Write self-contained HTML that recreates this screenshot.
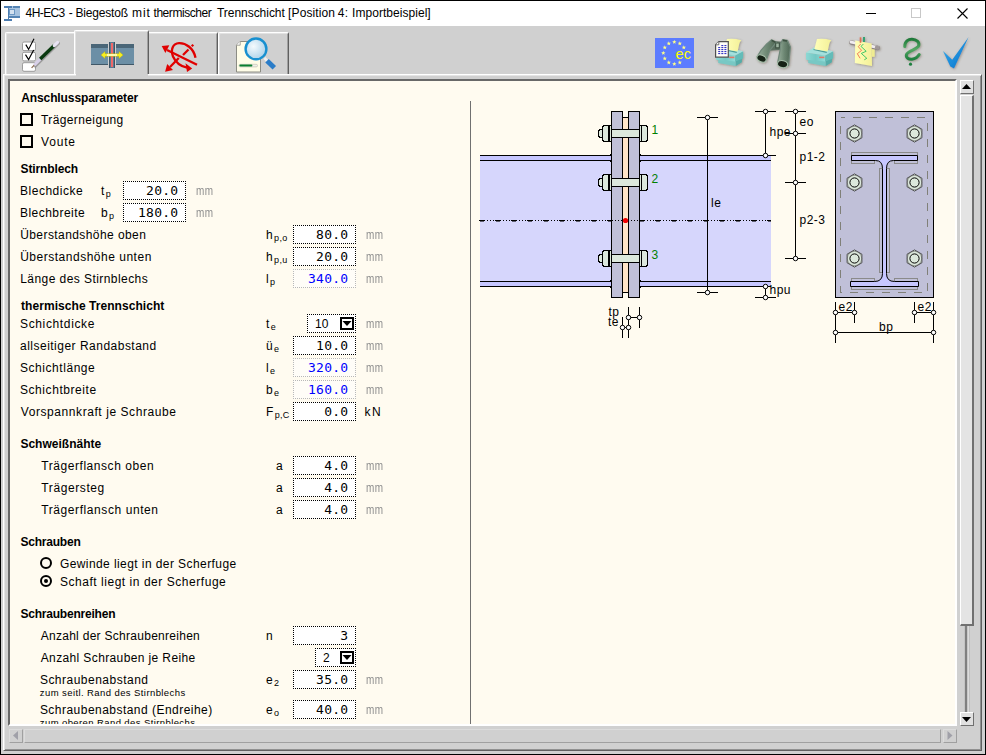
<!DOCTYPE html>
<html><head><meta charset="utf-8"><title>4H-EC3</title>
<style>
*{box-sizing:border-box;margin:0;padding:0}
html,body{width:986px;height:755px;overflow:hidden;background:#d0d0d0}
body{position:relative;font-family:"Liberation Sans",sans-serif;font-size:12px;color:#000}
div,span,svg,i,b{position:absolute}
#win{left:0;top:0;width:986px;height:755px;background:#d0d0d0;overflow:hidden}
#frame{left:0;top:0;width:986px;height:755px;border:1px solid #000;pointer-events:none}
#title{left:0;top:0;width:986px;height:26px;background:#fff}
#title .t{top:6px;font-size:12px;white-space:pre;letter-spacing:-0.055px;color:#000}
/* tab panel */
#panel{left:3px;top:74px;width:979px;height:677px;border-left:1px solid #fff;border-top:1px solid #fff;border-right:1px solid #606060;border-bottom:1px solid #606060;box-shadow:inset 1px 1px 0 #e4e4e4,inset -1px -1px 0 #909090}
#cream{left:8px;top:79px;width:949px;height:647px;background:#fffbf0;border-top:2px solid #686868;border-left:2px solid #686868;border-right:2px solid #fff;border-bottom:2px solid #fff;overflow:hidden}
#cream:before{content:"";position:absolute;left:-2px;top:-2px;right:-2px;height:1px;background:#a0a0a0}
.tab{border-left:1px solid #fff;border-top:1px solid #fff;border-right:1px solid #606060;background:#d0d0d0;border-radius:2px 2px 0 0;box-shadow:inset 1px 1px 0 #e2e2e2,inset -1px 0 0 #a0a0a0}
/* scroll */
.sbtn{width:14px;height:14px;background:#e0e0e0;border-left:1px solid #fff;border-top:1px solid #fff;border-right:1px solid #707070;border-bottom:1px solid #707070}
.sbtn svg,.hbtn svg{left:-1px;top:-1px}
.sth{background:#e4e4e4;border-left:1px solid #fff;border-top:1px solid #fff;border-right:2px solid #707070;border-bottom:2px solid #707070}
.hbtn{width:14px;height:14px;background:#d0d0d0;border-left:1px solid #dcdcdc;border-top:1px solid #dcdcdc;border-right:1px solid #a0a0a0;border-bottom:1px solid #a0a0a0}
.htr{background:#d0d0d0;border-left:1px solid #dcdcdc;border-top:1px solid #dcdcdc;border-right:1px solid #a0a0a0;border-bottom:1px solid #a0a0a0}
/* form */
.sub{position:relative;font-style:normal;font-size:9px;top:2px;letter-spacing:.3px;margin-left:1px}
.in{height:19px;background:#fff;border:1px dotted #000}
.in.ro{background:#fffdf8;border-color:#b8b8b8}
.in .v{right:6.6px;letter-spacing:.25px;top:2px;font-family:"DejaVu Sans Mono","Liberation Mono",monospace;font-size:13px;line-height:14px;white-space:pre}
.in.ro .v{color:#0000ff}
.in .dv{left:7px;top:2px;font-size:12px;line-height:14px;letter-spacing:0}
.ar{right:1px;top:2px;width:14px;height:13px;border:2px solid #000;background:#fff}
.ar svg{left:0;top:0}
.u{color:#8e8e8e;font-size:12px;line-height:14px;letter-spacing:.4px;transform:scaleX(.83);transform-origin:0 0}
.u.k{color:#000;transform:none}
.cb{width:13px;height:13px;border:2px solid #000}
.rb{width:12px;height:12px;border:2px solid #000;border-radius:50%}
.rb.on:after{content:"";position:absolute;left:2px;top:2px;width:4px;height:4px;background:#000;border-radius:50%}
.sm{font-size:9.5px;line-height:11px;white-space:pre;letter-spacing:.4px}

.l{white-space:pre;letter-spacing:.4px;font-size:12px;line-height:14px}
.h{white-space:pre;font-weight:bold;font-size:12px;line-height:14px}
</style></head>
<body>
<div id="win">
<div id="title"><span class="t" style="left:25.6px;letter-spacing:-0.6px">4H-EC3</span><span class="t" style="left:68.8px;letter-spacing:0px">-</span><span class="t" style="left:75.5px;letter-spacing:-0.18px">Biegestoß</span><span class="t" style="left:132.0px;letter-spacing:0.9px">mit</span><span class="t" style="left:153.5px;letter-spacing:-0.45px">thermischer</span><span class="t" style="left:217px;letter-spacing:-0.04px">Trennschicht</span><span class="t" style="left:288.1px;letter-spacing:0.1px">[Position</span><span class="t" style="left:337.8px;letter-spacing:0.4px">4:</span><span class="t" style="left:352.1px;letter-spacing:0.04px">Importbeispiel]</span></div>
<div id="panel"></div>
<div class="tab" style="left:5px;top:32px;width:72px;height:42px"></div>
<div class="tab" style="left:147px;top:32px;width:71px;height:42px"></div>
<div class="tab" style="left:218px;top:32px;width:71px;height:42px"></div>
<div class="tab" style="left:74px;top:30px;width:75px;height:44px"></div>
<div style="left:76px;top:74px;width:72px;height:2px;background:#d0d0d0"></div>
<svg width="986" height="80" viewBox="0 0 986 80" style="left:0;top:0" font-family="Liberation Sans, sans-serif">
<defs>
<linearGradient id="gchk" x1="0" y1="0" x2="1" y2="1"><stop offset="0" stop-color="#35b0f0"/><stop offset="1" stop-color="#0870c8"/></linearGradient>
<radialGradient id="glens" cx="0.38" cy="0.38" r="0.7"><stop offset="0" stop-color="#f4fafd"/><stop offset="1" stop-color="#a8d0e8"/></radialGradient>
<linearGradient id="gpap" x1="0" y1="0" x2="1" y2="0"><stop offset="0" stop-color="#ffffb8"/><stop offset="1" stop-color="#f4f098"/></linearGradient>
<linearGradient id="groll" x1="0" y1="0" x2="0" y2="1"><stop offset="0" stop-color="#ffffff"/><stop offset="1" stop-color="#a8a0a0"/></linearGradient>
<linearGradient id="gbino" x1="0" y1="0" x2="1" y2="0"><stop offset="0" stop-color="#9ab09e"/><stop offset="0.5" stop-color="#6e8874"/><stop offset="1" stop-color="#4e6654"/></linearGradient>
<linearGradient id="gq" x1="0" y1="0" x2="0" y2="1"><stop offset="0" stop-color="#1f7a3a"/><stop offset="0.5" stop-color="#55a865"/><stop offset="1" stop-color="#1f8040"/></linearGradient>
<filter id="sh" x="-20%" y="-20%" width="150%" height="150%"><feDropShadow dx="0.8" dy="0.8" stdDeviation="0.9" flood-color="#5a4a30" flood-opacity="0.45"/></filter>
<linearGradient id="gpf" x1="0" y1="0" x2="1" y2="0"><stop offset="0" stop-color="#8cd8d4"/><stop offset="0.5" stop-color="#74c8c4"/><stop offset="1" stop-color="#90dcd8"/></linearGradient>
</defs>
<g shape-rendering="crispEdges"><rect x="9" y="6" width="11" height="12" fill="#a8c4e0"/><rect x="13" y="6" width="7" height="2" fill="#5484b4"/><rect x="9" y="16" width="11" height="2" fill="#5484b4"/><rect x="9.5" y="9.5" width="5" height="5" fill="#d4e2f0" stroke="#6c98c4"/>
<rect x="4" y="6" width="8" height="2" fill="#4c7cb0"/><rect x="4" y="19" width="8" height="2" fill="#4c7cb0"/><rect x="7.5" y="6" width="1.5" height="15" fill="#4c7cb0"/></g>
<g stroke="#000" stroke-width="1" fill="none"><path d="M866 13.5h10" shape-rendering="crispEdges"/><path d="M957.5 8.5l10 10M967.5 8.5l-10 10" stroke-width="1.1"/></g>
<rect x="911.5" y="8.5" width="9" height="9" fill="none" stroke="#c8c8c8" shape-rendering="crispEdges"/>
<rect x="22.5" y="42" width="13" height="8.6" rx="1.5" fill="#fff" stroke="#9c9c9c" stroke-width="1"/>
<rect x="22.5" y="52.3" width="13" height="8.6" rx="1.5" fill="#fff" stroke="#9c9c9c" stroke-width="1"/>
<rect x="22.5" y="62.7" width="13" height="8.6" rx="1.5" fill="#fff" stroke="#9c9c9c" stroke-width="1"/>
<path d="M25.8 44.6L28.6 49.4L34 38.8" fill="none" stroke="#000" stroke-width="1.15"/>
<path d="M25.5 54.6L28.6 59.6L33.7 50" fill="none" stroke="#000" stroke-width="1.15"/>
<path d="M35.2 66L58.4 43.4" stroke="#8c8c8c" stroke-width="3.2" stroke-linecap="round" opacity="0.75"/>
<path d="M31.6 67.9L34.5 64.8" stroke="#8a6a50" stroke-width="1.2"/>
<path d="M34.2 65.2L40.6 58.6" stroke="#d8d0e8" stroke-width="3" />
<path d="M40.2 59L54.2 45.6" stroke="#0a3a10" stroke-width="3.4"/>
<path d="M54.2 45.6L57.6 42.4" stroke="#e8e4f4" stroke-width="3" stroke-linecap="round"/>
<g shape-rendering="crispEdges"><rect x="91" y="44" width="17" height="21" fill="#6c8fa6"/><rect x="91" y="44" width="17" height="4" fill="#4a6678"/><rect x="91" y="64" width="17" height="1" fill="#405868"/>
<rect x="116" y="44" width="18" height="21" fill="#6c8fa6"/><rect x="116" y="44" width="18" height="4" fill="#4a6678"/><rect x="116" y="64" width="18" height="1" fill="#405868"/>
<rect x="109" y="42" width="6" height="26" fill="#5a7a90"/><rect x="109" y="42" width="1" height="26" fill="#3c5466"/><rect x="114" y="42" width="1" height="26" fill="#3c5466"/><rect x="111" y="43" width="2" height="24" fill="#f06868"/></g>
<path d="M101 55L105 51.5V53.7H119V51.5L123 55L119 58.5V56.3H105V58.5Z" fill="#f8f020" stroke="#c8b800" stroke-width="0.4"/><path d="M107 55H117" stroke="#fffff0" stroke-width="1.4"/>
<g stroke="#e00000" fill="none" stroke-width="2.3"><path d="M197 64.7L167 50"/><path d="M188.5 49.5L183 55"/><path d="M178.8 58L170 67"/>
<path d="M195.5 57.7C193.5 48 186 43 179 43.2C172.5 43.5 170.5 50 173 56.5C175.5 62 181 66.5 187 67.6"/></g>
<path d="M161.7 46.1L169.3 45.2L165.4 53.1Z" fill="#e00000"/><path d="M165.1 71.7L167.2 64.1L173 69.9Z" fill="#e00000"/><path d="M192.2 68.6L185.5 63.2L187 72Z" fill="#e00000"/><path d="M192.5 43.9l1.6 1.6l-1.6 1.6l-1.6 -1.6z" fill="#e00000"/>
<path d="M240.2 41.5H260.5V72H236.5V45.2Z" fill="#fffde8" stroke="#8c8c84" stroke-width="1"/><path d="M236.5 45.2H240.2V41.5" fill="#fff" stroke="#8c8c84" stroke-width="0.8"/>
<rect x="239" y="64.3" width="18.5" height="2.6" rx="1.2" fill="#f0f0e8" stroke="#b0b0a0" stroke-width="0.5"/><rect x="239.4" y="64.6" width="13" height="2" rx="1" fill="#0a8030"/>
<path d="M264.5 58L267.3 61" stroke="#f0f0f0" stroke-width="2.6"/><path d="M267 60.7L274.3 67.7" stroke="#2a7cc8" stroke-width="5"/>
<circle cx="256" cy="48.9" r="10.4" fill="url(#glens)" stroke="#1890d0" stroke-width="2.4"/>
<rect x="655" y="38" width="39" height="30" fill="#5c7cff" shape-rendering="crispEdges"/>
<polygon points="674.30,39.70 674.87,41.22 676.49,41.29 675.22,42.30 675.65,43.86 674.30,42.97 672.95,43.86 673.38,42.30 672.11,41.29 673.73,41.22" fill="#ffff88"/>
<polygon points="679.80,41.17 680.37,42.69 681.99,42.76 680.72,43.77 681.15,45.33 679.80,44.44 678.45,45.33 678.88,43.77 677.61,42.76 679.23,42.69" fill="#ffff88"/>
<polygon points="683.83,45.20 684.39,46.72 686.01,46.79 684.75,47.80 685.18,49.36 683.83,48.47 682.47,49.36 682.91,47.80 681.64,46.79 683.26,46.72" fill="#ffff88"/>
<polygon points="679.80,60.23 680.37,61.74 681.99,61.82 680.72,62.82 681.15,64.39 679.80,63.49 678.45,64.39 678.88,62.82 677.61,61.82 679.23,61.74" fill="#ffff88"/>
<polygon points="674.30,61.70 674.87,63.22 676.49,63.29 675.22,64.30 675.65,65.86 674.30,64.97 672.95,65.86 673.38,64.30 672.11,63.29 673.73,63.22" fill="#ffff88"/>
<polygon points="668.80,60.23 669.37,61.74 670.99,61.82 669.72,62.82 670.15,64.39 668.80,63.49 667.45,64.39 667.88,62.82 666.61,61.82 668.23,61.74" fill="#ffff88"/>
<polygon points="664.77,56.20 665.34,57.72 666.96,57.79 665.69,58.80 666.13,60.36 664.77,59.47 663.42,60.36 663.85,58.80 662.59,57.79 664.21,57.72" fill="#ffff88"/>
<polygon points="663.30,50.70 663.87,52.22 665.49,52.29 664.22,53.30 664.65,54.86 663.30,53.97 661.95,54.86 662.38,53.30 661.11,52.29 662.73,52.22" fill="#ffff88"/>
<polygon points="664.77,45.20 665.34,46.72 666.96,46.79 665.69,47.80 666.13,49.36 664.77,48.47 663.42,49.36 663.85,47.80 662.59,46.79 664.21,46.72" fill="#ffff88"/>
<polygon points="668.80,41.17 669.37,42.69 670.99,42.76 669.72,43.77 670.15,45.33 668.80,44.44 667.45,45.33 667.88,43.77 666.61,42.76 668.23,42.69" fill="#ffff88"/>
<text x="675.6" y="59.2" font-size="14.6" fill="#ffff00">ec</text>
<g transform="translate(706,30)" filter="url(#sh)">
<path d="M12.2 27L29.8 30V35.9L12.2 32.9Z" fill="#78c8c4"/><path d="M29.8 30L35.9 26.5V32.3L29.8 35.9Z" fill="#54aca8"/>
<path d="M10 22.5L29.2 25.6V31.6L10 29.8Z" fill="url(#gpf)"/>
<path d="M29.2 25.6L37.1 21.3V28.6L29.2 31.6Z" fill="#64bcb8"/>
<path d="M10 22.5L18.3 17.3L37.1 21.3L29.2 25.6Z" fill="#a4e0dc"/>
<path d="M17.6 19.4L30.8 22.3" stroke="#4c9c98" stroke-width="1.2"/>
<path d="M18.3 19.2L21 9.1Q28 8.3 35.3 10.3Q33.6 12 33.2 14L31.6 21.6Z" fill="url(#gpap)"/>
<path d="M23.2 26.6h5.2v1.6h-5.2z" fill="#e07868"/>
</g>
<path d="M718.8 41.6H728.3V57.2H715.6V44.8Z" fill="#fffef8" stroke="#505050" stroke-width="1.2"/><path d="M715.6 44.8H718.8V41.6" fill="#fff" stroke="#505050" stroke-width="0.8"/>
<rect x="721.3" y="45.1" width="2" height="1" fill="#2020c0"/>
<rect x="724.4" y="45.1" width="2" height="1" fill="#2020c0"/>
<rect x="718.2" y="47.1" width="2" height="1" fill="#2020c0"/>
<rect x="721.3" y="47.1" width="2" height="1" fill="#2020c0"/>
<rect x="724.4" y="47.1" width="2" height="1" fill="#2020c0"/>
<rect x="718.2" y="49.1" width="2" height="1" fill="#2020c0"/>
<rect x="721.3" y="49.1" width="2" height="1" fill="#2020c0"/>
<rect x="724.4" y="49.1" width="2" height="1" fill="#2020c0"/>
<rect x="718.2" y="51.1" width="2" height="1" fill="#2020c0"/>
<rect x="721.3" y="51.1" width="2" height="1" fill="#2020c0"/>
<rect x="724.4" y="51.1" width="2" height="1" fill="#2020c0"/>
<rect x="718.2" y="53.1" width="2" height="1" fill="#2020c0"/>
<rect x="721.3" y="53.1" width="2" height="1" fill="#2020c0"/>
<rect x="724.4" y="53.1" width="2" height="1" fill="#2020c0"/>
<g transform="translate(746,30)" filter="url(#sh)" stroke-linejoin="round">
<path d="M26.8 11.6L35.9 12.2L34.1 19.5L24.3 20.1Z" fill="#5a7060" stroke="#5a7060" stroke-width="1"/>
<path d="M20.7 14L25.6 9.7L30.4 12.2L23.7 20.7L20.1 30.4L11 26.8L15.2 20.1Z" fill="url(#gbino)" stroke="#70887a" stroke-width="1.2"/>
<path d="M34.1 15.2L36.5 9.7L41.4 10.3L44.4 17L42.6 35.3L31.6 32.9L34.1 20.1Z" fill="url(#gbino)" stroke="#70887a" stroke-width="1.2"/>
<path d="M29.2 12.8h4.6v5.6h-4.6z" fill="#3c5040"/><path d="M30.2 13.6h2.6v3.6h-2.6z" fill="#9cb4a0"/>
<path d="M25.6 10.4L29.6 12.4M36.8 10.4L41 11" stroke="#3c5040" stroke-width="1.6"/>
<ellipse cx="15.5" cy="28.6" rx="4.9" ry="3.3" transform="rotate(25 15.5 28.6)" fill="#182418" stroke="#a8c0ac" stroke-width="1.1"/>
<ellipse cx="36.6" cy="34.1" rx="5.2" ry="3.5" transform="rotate(12 36.6 34.1)" fill="#182418" stroke="#a8c0ac" stroke-width="1.1"/>
</g>
<g transform="translate(796,30)" filter="url(#sh)">
<path d="M12.2 27L29.8 30V35.9L12.2 32.9Z" fill="#78c8c4"/><path d="M29.8 30L35.9 26.5V32.3L29.8 35.9Z" fill="#54aca8"/>
<path d="M10 22.5L29.2 25.6V31.6L10 29.8Z" fill="url(#gpf)"/>
<path d="M29.2 25.6L37.1 21.3V28.6L29.2 31.6Z" fill="#64bcb8"/>
<path d="M10 22.5L18.3 17.3L37.1 21.3L29.2 25.6Z" fill="#a4e0dc"/>
<path d="M17.6 19.4L30.8 22.3" stroke="#4c9c98" stroke-width="1.2"/>
<path d="M18.3 19.2L21 9.1Q28 8.3 35.3 10.3Q33.6 12 33.2 14L31.6 21.6Z" fill="url(#gpap)"/>
<path d="M23.2 26.6h5.2v1.6h-5.2z" fill="#e07868"/>
</g>
<g transform="translate(840,30)" filter="url(#sh)">
<path d="M11.4 12.6L37.8 18" stroke="#8c8484" stroke-width="4.4" stroke-linecap="round"/>
<path d="M11.2 12.1L37.2 17.4" stroke="#f0ecf0" stroke-width="3" stroke-linecap="round"/>
<path d="M36.6 17.6L38 17.9" stroke="#a09898" stroke-width="3.6" stroke-linecap="round"/>
<path d="M31.6 18.9L34.7 19.5V26.8L32 26.8Z" fill="#f0ec90"/>
<path d="M15.2 10.6L31.6 13.4L32 35.9L14.9 32.9Z" fill="url(#gpap)"/>
<path d="M20.5 7.3V12.8" stroke="#e07050" stroke-width="1.6"/><path d="M24 7V11.9" stroke="#30a070" stroke-width="1.9"/>
<path d="M20.7 14L18.3 16.7L21.6 20.4L17.3 23.7L20.1 28.3" fill="none" stroke="#f07050" stroke-width="0.9"/>
<path d="M23.4 14L21 16.4L26.2 21.3L21.3 23.4L26.8 28.3L24.3 29.8" fill="none" stroke="#30c060" stroke-width="0.9"/>
</g>
<path d="M904.8 46.6C904.6 41.5 908.5 39 912 39.2C916.5 39.4 919.5 42 918.8 45.4C918 49.5 908 50.5 906.5 54.5C905.5 57.8 909 59.6 912 59.2C915.5 58.8 917.8 57 919.2 54.6" fill="none" stroke="url(#gq)" stroke-width="3" stroke-linecap="round" filter="url(#sh)"/>
<circle cx="910.5" cy="64.2" r="1.6" fill="#1f8040"/>
<path d="M943 51L952.2 59.8L968.5 37.3L954 68.4L950.3 66.6Z" fill="url(#gchk)" filter="url(#sh)"/>
</svg>
<div id="cream">
<div id="form" style="left:-10px;top:-81px;width:986px;height:755px">
<span class="h" style="left:21.2px;top:91px;letter-spacing:-0.1px">Anschlussparameter</span>
<div class="cb" style="left:20px;top:113px"></div>
<span class="l" style="left:41.0px;top:113px;letter-spacing:0.39px">Trägerneigung</span>
<div class="cb" style="left:20px;top:135px"></div>
<span class="l" style="left:41.0px;top:135px;letter-spacing:0.82px">Voute</span>
<span class="h" style="left:20.6px;top:162px;letter-spacing:-0.13px">Stirnblech</span>
<span class="l" style="left:20.0px;top:184px;letter-spacing:0.52px">Blechdicke</span>
<span class="l" style="left:101px;top:184px">t<i class="sub">p</i></span>
<div class="in" style="left:123px;top:181px;width:63px"><span class="v">20.0</span></div><span class="u" style="left:195.8px;top:184px">mm</span>
<span class="l" style="left:20.0px;top:206px;letter-spacing:0.46px">Blechbreite</span>
<span class="l" style="left:101px;top:206px">b<i class="sub">p</i></span>
<div class="in" style="left:123px;top:203px;width:63px"><span class="v">180.0</span></div><span class="u" style="left:195.8px;top:206px">mm</span>
<span class="l" style="left:20.2px;top:228px;letter-spacing:0.42px">Überstandshöhe oben</span>
<span class="l" style="left:266px;top:228px">h<i class="sub">p,o</i></span>
<div class="in" style="left:293px;top:225px;width:63px"><span class="v">80.0</span></div><span class="u" style="left:365.8px;top:228px">mm</span>
<span class="l" style="left:20.2px;top:250px;letter-spacing:0.51px">Überstandshöhe unten</span>
<span class="l" style="left:266px;top:250px">h<i class="sub">p,u</i></span>
<div class="in" style="left:293px;top:247px;width:63px"><span class="v">20.0</span></div><span class="u" style="left:365.8px;top:250px">mm</span>
<span class="l" style="left:20.2px;top:272px;letter-spacing:0.44px">Länge des Stirnblechs</span>
<span class="l" style="left:266px;top:272px">l<i class="sub">p</i></span>
<div class="in ro" style="left:293px;top:269px;width:63px"><span class="v">340.0</span></div><span class="u" style="left:365.8px;top:272px">mm</span>
<span class="h" style="left:21.0px;top:299px;letter-spacing:0.06px">thermische Trennschicht</span>
<span class="l" style="left:20.0px;top:317px;letter-spacing:0.64px">Schichtdicke</span>
<span class="l" style="left:266px;top:317px">t<i class="sub">e</i></span>
<div class="in" style="left:307px;top:314px;width:49px"><span class="dv">10</span><div class="ar"><svg width="10" height="9" viewBox="0 0 10 9"><path d="M0.5 2h9L5 7z" fill="#000"/></svg></div></div><span class="u" style="left:365.8px;top:317px">mm</span>
<span class="l" style="left:20.0px;top:339px;letter-spacing:0.49px">allseitiger Randabstand</span>
<span class="l" style="left:266px;top:339px">ü<i class="sub">e</i></span>
<div class="in" style="left:293px;top:336px;width:63px"><span class="v">10.0</span></div><span class="u" style="left:365.8px;top:339px">mm</span>
<span class="l" style="left:20.0px;top:361px;letter-spacing:0.55px">Schichtlänge</span>
<span class="l" style="left:266px;top:361px">l<i class="sub">e</i></span>
<div class="in ro" style="left:293px;top:358px;width:63px"><span class="v">320.0</span></div><span class="u" style="left:365.8px;top:361px">mm</span>
<span class="l" style="left:20.0px;top:383px;letter-spacing:0.56px">Schichtbreite</span>
<span class="l" style="left:266px;top:383px">b<i class="sub">e</i></span>
<div class="in ro" style="left:293px;top:380px;width:63px"><span class="v">160.0</span></div><span class="u" style="left:365.8px;top:383px">mm</span>
<span class="l" style="left:20.8px;top:405px;letter-spacing:0.57px">Vorspannkraft je Schraube</span>
<span class="l" style="left:266px;top:405px">F<i class="sub">p,C</i></span>
<div class="in" style="left:293px;top:402px;width:63px"><span class="v">0.0</span></div><span class="u k" style="left:364.6px;top:405px;letter-spacing:1.3px">kN</span>
<span class="h" style="left:20.4px;top:437px;letter-spacing:0.02px">Schweißnähte</span>
<span class="l" style="left:41.3px;top:459px;letter-spacing:0.55px">Trägerflansch oben</span>
<span class="l" style="left:276px;top:459px">a</span>
<div class="in" style="left:293px;top:456px;width:63px"><span class="v">4.0</span></div><span class="u" style="left:365.8px;top:459px">mm</span>
<span class="l" style="left:41.3px;top:481px;letter-spacing:0.6px">Trägersteg</span>
<span class="l" style="left:276px;top:481px">a</span>
<div class="in" style="left:293px;top:478px;width:63px"><span class="v">4.0</span></div><span class="u" style="left:365.8px;top:481px">mm</span>
<span class="l" style="left:41.3px;top:503px;letter-spacing:0.58px">Trägerflansch unten</span>
<span class="l" style="left:276px;top:503px">a</span>
<div class="in" style="left:293px;top:500px;width:63px"><span class="v">4.0</span></div><span class="u" style="left:365.8px;top:503px">mm</span>
<span class="h" style="left:20.4px;top:535px;letter-spacing:-0.21px">Schrauben</span>
<div class="rb" style="left:40px;top:557px"></div>
<span class="l" style="left:59.9px;top:557px;letter-spacing:0.42px">Gewinde liegt in der Scherfuge</span>
<div class="rb on" style="left:40px;top:575px"></div>
<span class="l" style="left:59.9px;top:575px;letter-spacing:0.54px">Schaft liegt in der Scherfuge</span>
<span class="h" style="left:20.4px;top:607px;letter-spacing:-0.21px">Schraubenreihen</span>
<span class="l" style="left:40.7px;top:629px;letter-spacing:0.28px">Anzahl der Schraubenreihen</span>
<span class="l" style="left:266px;top:629px">n</span>
<div class="in" style="left:293px;top:626px;width:63px"><span class="v">3</span></div>
<span class="l" style="left:40.7px;top:651px;letter-spacing:0.38px">Anzahl Schrauben je Reihe</span>
<div class="in" style="left:315px;top:648px;width:41px"><span class="dv">2</span><div class="ar"><svg width="10" height="9" viewBox="0 0 10 9"><path d="M0.5 2h9L5 7z" fill="#000"/></svg></div></div>
<span class="l" style="left:39.9px;top:673px;letter-spacing:0.49px">Schraubenabstand</span>
<span class="l" style="left:266px;top:673px">e<i class="sub">2</i></span>
<div class="in" style="left:293px;top:670px;width:63px"><span class="v">35.0</span></div><span class="u" style="left:365.8px;top:673px">mm</span>
<span class="sm" style="left:39.8px;top:687px;letter-spacing:0.41px">zum seitl. Rand des Stirnblechs</span>
<span class="l" style="left:39.9px;top:703px;letter-spacing:0.47px">Schraubenabstand (Endreihe)</span>
<span class="l" style="left:266px;top:703px">e<i class="sub">o</i></span>
<div class="in" style="left:293px;top:700px;width:63px"><span class="v">40.0</span></div><span class="u" style="left:365.8px;top:703px">mm</span>
<span class="sm" style="left:39.8px;top:717px;letter-spacing:0.4px">zum oberen Rand des Stirnblechs</span>
<div style="left:470px;top:101px;width:1px;height:640px;background:#707070"></div>
</div>
<div id="draw" style="left:-10px;top:-81px;width:986px;height:755px">
<svg width="986" height="755" viewBox="0 0 986 755" style="left:0;top:0" font-family="Liberation Sans, sans-serif" font-size="12" letter-spacing="0.5">
<g shape-rendering="crispEdges" stroke="#000" stroke-width="1">
<rect x="480" y="155" width="291" height="132" fill="#d6d6fc" stroke="none"/>
<rect x="480" y="155" width="291" height="6" fill="#c6c6ff" stroke="none"/>
<rect x="480" y="281" width="291" height="6" fill="#c6c6ff" stroke="none"/>
<path d="M480 155.5H771"/>
<path d="M480 160.5H771"/>
<path d="M480 281.5H771"/>
<path d="M480 286.5H771"/>
<path d="M611.5 155.5h-2.6l2.6 -2.6z" fill="#000" stroke="none"/>
<path d="M611.5 160.5h-2.6l2.6 2.6z" fill="#000" stroke="none"/>
<path d="M611.5 281.5h-2.6l2.6 -2.6z" fill="#000" stroke="none"/>
<path d="M611.5 286.5h-2.6l2.6 2.6z" fill="#000" stroke="none"/>
<path d="M639.5 155.5h2.6l-2.6 -2.6z" fill="#000" stroke="none"/>
<path d="M639.5 160.5h2.6l-2.6 2.6z" fill="#000" stroke="none"/>
<path d="M639.5 281.5h2.6l-2.6 -2.6z" fill="#000" stroke="none"/>
<path d="M639.5 286.5h2.6l-2.6 2.6z" fill="#000" stroke="none"/>
<rect x="622.5" y="117.5" width="6" height="175" fill="#ffe4c8"/>
<rect x="611.5" y="111.5" width="11" height="186" fill="#c0c0d8"/>
<rect x="628.5" y="111.5" width="11" height="186" fill="#c0c0d8"/>
<path d="M602.5 129.5H600l-1.5 1.5v5l1.5 1.5h2.5z" fill="#dce8dc"/>
<path d="M604 125.5h4.5v16H604l-1.5 -1.5v-13z" fill="#dce8dc"/>
<rect x="608.5" y="125.5" width="3" height="16" fill="#dce8dc"/>
<path d="M608.5 125.5v16" stroke-width="2"/>
<rect x="639.5" y="125.5" width="2" height="16" fill="#dce8dc"/>
<path d="M641.5 125.5h4.5l1.5 1.5v13l-1.5 1.5h-4.5z" fill="#dce8dc"/>
<rect x="611.5" y="129.5" width="28" height="8" fill="#dce8dc"/>
<path d="M602.5 178.5H600l-1.5 1.5v5l1.5 1.5h2.5z" fill="#dce8dc"/>
<path d="M604 174.5h4.5v16H604l-1.5 -1.5v-13z" fill="#dce8dc"/>
<rect x="608.5" y="174.5" width="3" height="16" fill="#dce8dc"/>
<path d="M608.5 174.5v16" stroke-width="2"/>
<rect x="639.5" y="174.5" width="2" height="16" fill="#dce8dc"/>
<path d="M641.5 174.5h4.5l1.5 1.5v13l-1.5 1.5h-4.5z" fill="#dce8dc"/>
<rect x="611.5" y="178.5" width="28" height="8" fill="#dce8dc"/>
<path d="M602.5 254.5H600l-1.5 1.5v5l1.5 1.5h2.5z" fill="#dce8dc"/>
<path d="M604 250.5h4.5v16H604l-1.5 -1.5v-13z" fill="#dce8dc"/>
<rect x="608.5" y="250.5" width="3" height="16" fill="#dce8dc"/>
<path d="M608.5 250.5v16" stroke-width="2"/>
<rect x="639.5" y="250.5" width="2" height="16" fill="#dce8dc"/>
<path d="M641.5 250.5h4.5l1.5 1.5v13l-1.5 1.5h-4.5z" fill="#dce8dc"/>
<rect x="611.5" y="254.5" width="28" height="8" fill="#dce8dc"/>
<path d="M707.5 117V293M697 117.5H718M697 292.5H718"/>
<path d="M765.5 111V156M755 111.5H776M765 155.5H776"/>
<path d="M765.5 286V298M755 297.5H776"/>
<path d="M795.5 111V259M785 111.5H806M785 133.5H806M785 182.5H806M785 258.5H806"/>
<path d="M628.5 307V338M639.5 307V328M622.5 317V338M628 317.5H640M622 327.5H629"/>
<rect x="835.5" y="111.5" width="98" height="186" fill="#c0c0d8"/>
<rect x="840.5" y="117.5" width="87" height="175" fill="none" stroke="#808078" stroke-dasharray="8 8" stroke-dashoffset="4"/>
</g>
<g fill="none" stroke="#8a8a8a" stroke-width="1" shape-rendering="crispEdges">
<rect x="851.5" y="152.5" width="66" height="3"/>
<rect x="851.5" y="160.5" width="23" height="3"/><rect x="894.5" y="160.5" width="23" height="3"/>
<rect x="879.5" y="168.5" width="3" height="104"/><rect x="886.5" y="168.5" width="3" height="104"/>
<rect x="851.5" y="278.5" width="23" height="3"/><rect x="894.5" y="278.5" width="23" height="3"/>
<rect x="851.5" y="286.5" width="66" height="3"/>
</g>
<path d="M851.5 155.5H917.5V160.5H893.5Q886.5 160.5 886.5 168.5V273.5Q886.5 281.5 894.5 281.5H918.5V286.5H850.5V281.5H874.5Q882.5 281.5 882.5 273.5V168.5Q882.5 160.5 875.5 160.5H851.5Z" fill="#c6c6ff" stroke="#000" stroke-width="1"/>
<polygon points="854.5,124.9 861.9,129.2 861.9,137.8 854.5,142.1 847.1,137.8 847.1,129.2" fill="#dce8dc" stroke="#303030" stroke-width="0.8"/>
<circle cx="854.5" cy="133.5" r="4.6" fill="none" stroke="#000" stroke-width="1"/>
<circle cx="854.5" cy="133.5" r="7.2" fill="none" stroke="#606060" stroke-width="0.6"/>
<polygon points="854.5,173.9 861.9,178.2 861.9,186.8 854.5,191.1 847.1,186.8 847.1,178.2" fill="#dce8dc" stroke="#303030" stroke-width="0.8"/>
<circle cx="854.5" cy="182.5" r="4.6" fill="none" stroke="#000" stroke-width="1"/>
<circle cx="854.5" cy="182.5" r="7.2" fill="none" stroke="#606060" stroke-width="0.6"/>
<polygon points="854.5,249.9 861.9,254.2 861.9,262.8 854.5,267.1 847.1,262.8 847.1,254.2" fill="#dce8dc" stroke="#303030" stroke-width="0.8"/>
<circle cx="854.5" cy="258.5" r="4.6" fill="none" stroke="#000" stroke-width="1"/>
<circle cx="854.5" cy="258.5" r="7.2" fill="none" stroke="#606060" stroke-width="0.6"/>
<polygon points="914.5,124.9 921.9,129.2 921.9,137.8 914.5,142.1 907.1,137.8 907.1,129.2" fill="#dce8dc" stroke="#303030" stroke-width="0.8"/>
<circle cx="914.5" cy="133.5" r="4.6" fill="none" stroke="#000" stroke-width="1"/>
<circle cx="914.5" cy="133.5" r="7.2" fill="none" stroke="#606060" stroke-width="0.6"/>
<polygon points="914.5,173.9 921.9,178.2 921.9,186.8 914.5,191.1 907.1,186.8 907.1,178.2" fill="#dce8dc" stroke="#303030" stroke-width="0.8"/>
<circle cx="914.5" cy="182.5" r="4.6" fill="none" stroke="#000" stroke-width="1"/>
<circle cx="914.5" cy="182.5" r="7.2" fill="none" stroke="#606060" stroke-width="0.6"/>
<polygon points="914.5,249.9 921.9,254.2 921.9,262.8 914.5,267.1 907.1,262.8 907.1,254.2" fill="#dce8dc" stroke="#303030" stroke-width="0.8"/>
<circle cx="914.5" cy="258.5" r="4.6" fill="none" stroke="#000" stroke-width="1"/>
<circle cx="914.5" cy="258.5" r="7.2" fill="none" stroke="#606060" stroke-width="0.6"/>
<g shape-rendering="crispEdges" stroke="#000" stroke-width="1">
<path d="M835.5 302V343M933.5 302V343M854.5 302V323M914.5 302V323M835 312.5H855M914 312.5H934M835 332.5H934"/>
</g>
<circle cx="707.5" cy="117.5" r="2.25" fill="#fff" stroke="#000" shape-rendering="auto"/>
<circle cx="707.5" cy="292.5" r="2.25" fill="#fff" stroke="#000" shape-rendering="auto"/>
<circle cx="765.5" cy="111.5" r="2.25" fill="#fff" stroke="#000" shape-rendering="auto"/>
<circle cx="765.5" cy="155.5" r="2.25" fill="#fff" stroke="#000" shape-rendering="auto"/>
<circle cx="765.5" cy="286.5" r="2.25" fill="#fff" stroke="#000" shape-rendering="auto"/>
<circle cx="765.5" cy="297.5" r="2.25" fill="#fff" stroke="#000" shape-rendering="auto"/>
<circle cx="795.5" cy="111.5" r="2.25" fill="#fff" stroke="#000" shape-rendering="auto"/>
<circle cx="795.5" cy="133.5" r="2.25" fill="#fff" stroke="#000" shape-rendering="auto"/>
<circle cx="795.5" cy="182.5" r="2.25" fill="#fff" stroke="#000" shape-rendering="auto"/>
<circle cx="795.5" cy="258.5" r="2.25" fill="#fff" stroke="#000" shape-rendering="auto"/>
<circle cx="628.5" cy="317.5" r="2.25" fill="#fff" stroke="#000" shape-rendering="auto"/>
<circle cx="639.5" cy="317.5" r="2.25" fill="#fff" stroke="#000" shape-rendering="auto"/>
<circle cx="622.5" cy="327.5" r="2.25" fill="#fff" stroke="#000" shape-rendering="auto"/>
<circle cx="628.5" cy="327.5" r="2.25" fill="#fff" stroke="#000" shape-rendering="auto"/>
<circle cx="835.5" cy="312.5" r="2.25" fill="#fff" stroke="#000" shape-rendering="auto"/>
<circle cx="854.5" cy="312.5" r="2.25" fill="#fff" stroke="#000" shape-rendering="auto"/>
<circle cx="914.5" cy="312.5" r="2.25" fill="#fff" stroke="#000" shape-rendering="auto"/>
<circle cx="933.5" cy="312.5" r="2.25" fill="#fff" stroke="#000" shape-rendering="auto"/>
<circle cx="835.5" cy="332.5" r="2.25" fill="#fff" stroke="#000" shape-rendering="auto"/>
<circle cx="933.5" cy="332.5" r="2.25" fill="#fff" stroke="#000" shape-rendering="auto"/>
<path d="M479 220.5H771" stroke="#000" stroke-width="1" stroke-dasharray="6 2 1 2 1 2 1 1" shape-rendering="crispEdges"/>
<path d="M480 221.5H771" stroke="#000" stroke-opacity="0.55" stroke-width="1" stroke-dasharray="4 12" shape-rendering="crispEdges"/>
<circle cx="625.5" cy="220.5" r="2.6" fill="#f00000"/>
<text x="651.5" y="134" fill="#008000">1</text>
<text x="651.5" y="183" fill="#008000">2</text>
<text x="651.5" y="259" fill="#008000">3</text>
<text x="711" y="207" fill="#000">le</text>
<text x="769.5" y="136" fill="#000">hpe</text>
<text x="769.5" y="294" fill="#000">hpu</text>
<text x="799.5" y="126" fill="#000">eo</text>
<text x="799.5" y="160.5" fill="#000">p1-2</text>
<text x="799.5" y="223.5" fill="#000">p2-3</text>
<text x="608.5" y="315.5" fill="#000">tp</text>
<text x="608" y="325.5" fill="#000">te</text>
<text x="838.5" y="310.5" fill="#000">e2</text>
<text x="917.5" y="310.5" fill="#000">e2</text>
<text x="879" y="330.5" fill="#000">bp</text>
</svg>
</div>
</div>
<div class="sbtn" style="left:960px;top:80px"><svg width="14" height="14"><path d="M2 9h9L6.5 4z" fill="#000"/></svg></div>
<div class="sth" style="left:960px;top:95px;width:14px;height:531px"></div>
<div style="left:964px;top:626px;width:6px;height:86px;background:linear-gradient(90deg,#c4c4c4 0 1px,#808080 1px 3px,#c8c8c8 3px 4px,#dcdcdc 4px 5px,#c0c0c0 5px 6px)"></div>
<div class="sbtn" style="left:960px;top:712px"><svg width="14" height="14"><path d="M2 5h9L6.5 10z" fill="#000"/></svg></div>
<div class="hbtn" style="left:9px;top:729px"><svg width="14" height="14"><path d="M9 2v9L4 6.5z" fill="#a0a0a8"/></svg></div>
<div class="htr" style="left:24px;top:729px;width:917px;height:14px"></div>
<div class="hbtn" style="left:943px;top:729px"><svg width="14" height="14"><path d="M4.5 2v9L9.5 6.5z" fill="#a0a0a8"/></svg></div>

<div id="frame"></div>
</div>
</body></html>
